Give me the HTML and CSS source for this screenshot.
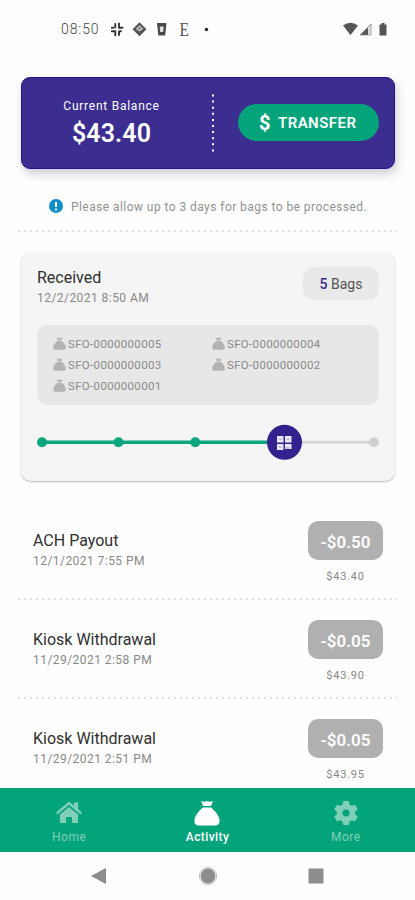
FILE: index.html
```html
<!DOCTYPE html>
<html lang="en">
<head>
<meta charset="utf-8">
<title>Activity</title>
<link rel="stylesheet" href="styles.css">
</head>
<body>
<svg class="defs" width="0" height="0">
  <symbol id="bag" viewBox="0 0 26 26"><path d="M7 1q3 1.500 6 0q3 1.500 6 0L17 6H9ZM9 7.500h8C21 11 25 15 25.500 20C26 24 24 25.500 21 25.500H5C2 25.500 0 24 .5 20C1 15 5 11 9 7.500Z"/></symbol>
</svg>
<div class="screen">
  <header class="status">
    <span class="clock">08:50</span>
    <svg class="apps" width="150" height="18" viewBox="0 0 150 18">
      <g stroke="#333" stroke-width="1.900" stroke-linecap="round" fill="none"><path d="M5.300 4v3.500M1.800 7.800h1.500M9 3.500v4.200M9.500 7.700h3M1.800 11.300h3.500M5.300 11.300v4M9 11.500v3.500M9.500 11.300h1.500"/></g>
      <path d="M29.500 2.200l7 7-7 7-7-7z" fill="#555"/><path d="M25.500 9l4-3.700 4 3.700-4 2.500z" fill="#bbb"/><path d="M27.500 9l2-1.800 2 1.800z" fill="#777"/>
      <path d="M47 3h9.500l-1.300 12.500h-6.900z" fill="#484848"/><path d="M49.700 6.500h4l-.5 5.500h-3z" fill="#ddd"/>
      <text x="69.500" y="15.500" class="serif-e" textLength="9.500" lengthAdjust="spacingAndGlyphs">E</text>
      <circle cx="96.500" cy="9.500" r="1.700" fill="#222"/>
    </svg>
    <svg class="signal" width="46" height="18" viewBox="0 0 46 18">
      <path d="M0 5.500Q7.500 0 15 5.500L7.500 15Z" fill="#555"/>
      <path d="M17 15L28 4v11z" fill="#ddd"/><path d="M17 15L25 7.500V15z" fill="#555"/><path d="M17 15L28 4v11z" fill="none" stroke="#888" stroke-width=".7"/>
      <path d="M36.500 4.500h2V3h3v1.500h2v11h-7z" fill="#555"/>
    </svg>
  </header>

  <section class="balance">
    <div class="amount-box">
      <div class="label"><span>Current Balance</span></div>
      <div class="amount">$43.40</div>
    </div>
    <svg class="divider" width="4" height="60"><path d="M2 1.500v58" stroke="#fff" stroke-width="2" stroke-dasharray="2 4.100"/></svg>
    <div class="action"><div class="transfer"><span class="dollar">$</span><span class="transfer-text">TRANSFER</span></div></div>
  </section>

  <div class="notice">
    <svg width="14" height="14" viewBox="0 0 14 14"><circle cx="7" cy="7" r="7" fill="#0f8fc6"/><path d="M7 3v5M7 9.500v2" stroke="#fff" stroke-width="2"/></svg>
    <span>Please allow up to 3 days for bags to be processed.</span>
  </div>
  <div class="dots"></div>

  <section class="card">
    <div class="card-head">
      <div class="card-title"><div class="title">Received</div><div class="date">12/2/2021 8:50 AM</div></div>
      <div class="bags"><b>5</b> Bags</div>
    </div>
    <div class="codes">
      <div class="code"><svg><use href="#bag"/></svg><span>SFO-0000000005</span></div>
      <div class="code"><svg><use href="#bag"/></svg><span>SFO-0000000004</span></div>
      <div class="code"><svg><use href="#bag"/></svg><span>SFO-0000000003</span></div>
      <div class="code"><svg><use href="#bag"/></svg><span>SFO-0000000002</span></div>
      <div class="code"><svg><use href="#bag"/></svg><span>SFO-0000000001</span></div>
    </div>
    <svg class="progress" width="342" height="36" viewBox="0 0 342 36">
      <path d="M248 18.300h90" stroke="#d7d7d7" stroke-width="3"/><circle cx="337" cy="18.300" r="5" fill="#d0d0d0"/>
      <path d="M5 18.300h243" stroke="#0aa67d" stroke-width="3.500"/>
      <g fill="#0aa67d"><circle cx="5" cy="18.300" r="5"/><circle cx="81.500" cy="18.300" r="5"/><circle cx="158.300" cy="18.300" r="5"/></g>
      <circle cx="247.500" cy="18.300" r="17.500" fill="#32228d"/>
      <path d="M240 12h6.500v6.500h-6.500zM248 12h6.500v6.500h-6.500zM240 20h6.500v6h-6.500zM248 20h6.500v5h-6.500z" fill="#e9e6f6"/>
      <path d="M242 15.300h2.500M250 15.300h2.500M242 23h2.500M249 24h3" stroke="#b5aedb" stroke-width="1.300"/>
    </svg>
  </section>

  <main class="list">
    <div class="row"><div><div class="title">ACH Payout</div><div class="date">12/1/2021 7:55 PM</div></div><div class="right"><div class="chip">-$0.50</div><div class="total">$43.40</div></div></div>
    <div class="dots"></div>
    <div class="row"><div><div class="title">Kiosk Withdrawal</div><div class="date">11/29/2021 2:58 PM</div></div><div class="right"><div class="chip">-$0.05</div><div class="total">$43.90</div></div></div>
    <div class="dots"></div>
    <div class="row"><div><div class="title">Kiosk Withdrawal</div><div class="date">11/29/2021 2:51 PM</div></div><div class="right"><div class="chip">-$0.05</div><div class="total">$43.95</div></div></div>
  </main>

  <nav class="tabs">
    <div class="tab"><svg width="28" height="26" viewBox="0 0 28 26"><path d="M1 12.500L14 1.500l5 4.200V2.500h4v6.500l4 3.500-1.500 2L14 4.700 2.500 14.500ZM5 14.500L14 7l9 7.500V23h-6v-6h-6v6H5Z"/></svg><span>Home</span></div>
    <div class="tab active"><svg width="26" height="26"><use href="#bag"/></svg><span>Activity</span></div>
    <div class="tab"><svg width="26" height="26" viewBox="0 0 24 24"><path fill-rule="evenodd" d="M9.500 1h5l.7 3.200 2 1.200 3.200-1 2.500 4.300-2.500 2.200v2.200l2.500 2.200-2.500 4.300-3.200-1-2 1.200-.7 3.200h-5l-.7-3.200-2-1.200-3.200 1-2.500-4.300 2.500-2.200v-2.200L1.100 8.700l2.500-4.300 3.200 1 2-1.200ZM12 8.700a3.300 3.300 0 1 0 0 6.600 3.300 3.300 0 1 0 0-6.600Z"/></svg><span>More</span></div>
  </nav>
  <footer class="system">
    <svg width="18" height="20" viewBox="0 0 18 20"><path d="M1 10L16 2v16z"/></svg>
    <svg width="20" height="20" viewBox="0 0 20 20"><circle cx="10" cy="10" r="8.500" fill="none" stroke="#bbb"/><circle cx="10" cy="10" r="7.400"/></svg>
    <svg width="16" height="20" viewBox="0 0 16 20"><path d="M.5 2.500h15v15H.5z"/></svg>
  </footer>
</div>
</body>
</html>
```
FILE: styles.css
```css
* { box-sizing: border-box; }
body { margin: 0; background: #fefefe; font-family: Roboto, sans-serif; color: #333; }
.defs { display: block; height: 0; }
.screen { width: 415px; height: 900px; display: flex; flex-direction: column; overflow: hidden; white-space: nowrap; }
.status { flex: none; height: 77px; display: flex; padding: 20px 26px 0 61px; }
.clock { width: 49px; font: 300 14px/19px Roboto, sans-serif; color: #444; letter-spacing: .9px; }
.serif-e { font: 18px "Liberation Serif", serif; fill: #555; }
.signal { margin-left: auto; }
.balance { flex: none; height: 92px; margin: 0 20px 0 21px; border-radius: 9px; background: #3b2e90; border: 1px solid #25138a; box-shadow: 2px 5px 10px rgba(50, 30, 60, .22); display: flex; align-items: center; color: #fff; }
.amount-box { width: 179px; text-align: center; }
.label { font-size: 12px; line-height: 16px; letter-spacing: .75px; }
.amount { font-size: 25px; font-weight: 600; line-height: 30px; margin-top: 5px; letter-spacing: .1px; }
.divider { margin-left: 10px; }
.action { flex: 1; display: flex; justify-content: flex-end; padding-right: 15px; margin-top: -1px; }
.transfer { width: 141px; height: 37px; border-radius: 19px; background: #04a47b; display: flex; align-items: center; padding-left: 21px; }
.dollar { width: 19px; font-size: 20px; font-weight: 700; }
.transfer-text { font-size: 15px; font-weight: 600; letter-spacing: .45px; }
.notice { flex: none; height: 47px; margin-top: 14px; padding: 16px 0 0 49px; display: flex; align-items: flex-start; gap: 8px; color: #929292; font-size: 12px; letter-spacing: .44px; line-height: 16px; }
.dots { flex: none; height: 2px; margin: 0 18px; background: repeating-linear-gradient(90deg, #e0e0e0 0 2px, transparent 2px 6px); }
.card { flex: none; width: 374px; height: 229px; margin: 20px 0 0 21px; padding: 16px 16px 0; border-radius: 10px; background: #f5f5f5; box-shadow: 0 1px 2px rgba(0, 0, 0, .28); }
.card-head { display: flex; justify-content: space-between; height: 57px; margin-top: -1px; margin-bottom: 1px; }
.card-title { padding-top: 1px; }
.title { font-size: 16px; line-height: 20px; color: #303030; }
.date { font-size: 12px; line-height: 16px; color: #888; margin-top: 2px; letter-spacing: .45px; }
.bags { width: 76px; height: 33px; border-radius: 11px; background: #e9e9e9; font-size: 14px; line-height: 34px; text-align: center; color: #555; }
.bags b { color: #3b2e90; font-weight: 500; }
.codes { height: 80px; border-radius: 10px; background: #e7e7e7; padding: 8px 16px; display: grid; grid-template-columns: 159px 1fr; grid-auto-rows: 21px; }
.code { display: flex; align-items: center; gap: 2px; color: #8a8a8a; font-size: 11.500px; letter-spacing: .33px; }
.code svg { width: 13px; height: 13px; fill: #b3b3b3; }
.progress { display: block; margin-top: 19px; }
.list { flex: none; height: 307px; padding-top: 40px; overflow: hidden; }
.row { height: 77px; display: flex; justify-content: space-between; padding: 10px 32px 0 33px; }
.list .dots + .row { margin-top: 20px; }
.right { width: 75px; margin-top: -10px; text-align: center; }
.chip { height: 39px; border-radius: 10px; background: #b0b0b0; color: #fff; font-size: 17px; font-weight: 600; line-height: 42px; }
.total { font-size: 11px; line-height: 14px; margin-top: 10px; color: #888; letter-spacing: .8px; }
.tabs { flex: none; height: 64px; background: #04a47b; display: flex; }
.tab { flex: 1; display: flex; flex-direction: column; align-items: center; padding-top: 12px; color: #80cfb9; fill: #80cfb9; font-size: 12px; line-height: 16px; letter-spacing: .5px; }
.tab span { margin-top: 3px; }
.active { color: #fff; fill: #fff; font-weight: 500; letter-spacing: .4px; }
.system { flex: 1; display: flex; align-items: center; padding: 0 91px 0 90px; justify-content: space-between; fill: #8c8c8c; }
```
